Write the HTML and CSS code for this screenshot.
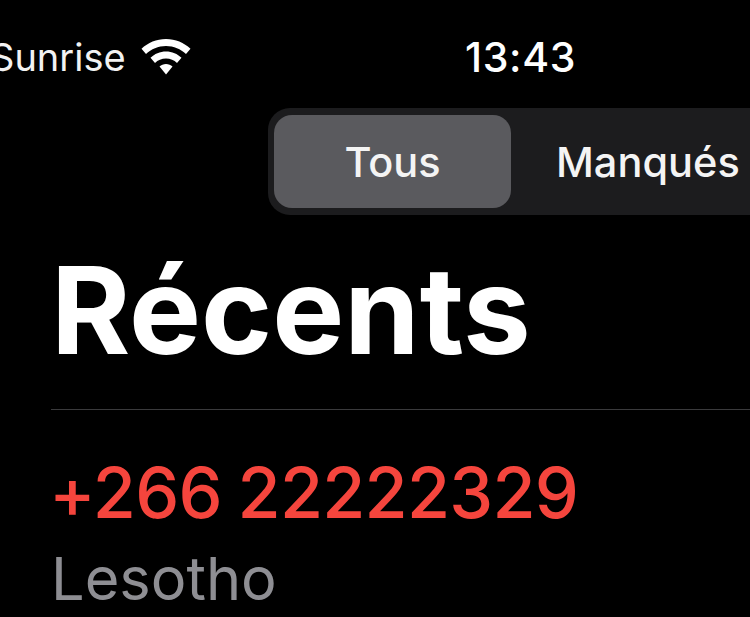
FILE: index.html
```html
<!DOCTYPE html>
<html lang="fr">
<head>
<meta charset="utf-8">
<title>Récents</title>
<link rel="stylesheet" href="styles.css">
</head>
<body>
<div class="status">
  <div class="carrier"><span>Sunrise</span>
    <svg class="wifi" width="50" height="36" viewBox="0 0 50 36"><path fill="#fff" d="M25 0C34.500 0 43 3.600 49.500 9.800L45 15C39.800 10 32.800 7 25 7S10.200 10 5 15L.5 9.800C7 3.600 15.500 0 25 0Z"/><path fill="#fff" d="M25 12.500C31 12.500 36.500 14.800 40.500 18.800L36 24C33.200 21.200 29.300 19.500 25 19.500S16.800 21.200 14 24L9.500 18.800C13.500 14.800 19 12.500 25 12.500Z"/><path fill="#fff" d="M25 25C27.500 25 29.800 26 31.500 27.600L25 35.500L18.500 27.600C20.200 26 22.500 25 25 25Z"/></svg>
  </div>
  <div class="time">13:43</div>
</div>
<div class="seg-row">
  <div class="seg">
    <div class="seg-item seg-on">Tous</div>
    <div class="seg-item">Manqués</div>
  </div>
</div>
<h1 class="title">Récents</h1>
<div class="row">
  <div class="num">+266 22222329</div>
  <div class="loc">Lesotho</div>
</div>
</body>
</html>
```
FILE: styles.css
```css
html, body {
  margin: 0;
  height: 617px;
  overflow: hidden;
  background: #000;
  color: #fff;
  font-family: Inter, "Liberation Sans", sans-serif;
}
.status {
  display: flex;
  align-items: center;
  height: 44px;
  padding-top: 35px;
  margin-left: -10px;
}
.carrier {
  display: flex;
  align-items: center;
  gap: 15px;
  width: 475px;
  font-size: 38px;
  line-height: 44px;
  color: #f2f2f2;
}
.wifi {
  flex: none;
  width: 50px;
  height: 36px;
}
.time {
  font-size: 41px;
  font-weight: 500;
  line-height: 44px;
  letter-spacing: .7px;
}
.seg-row {
  display: flex;
  justify-content: flex-start;
  margin-top: 29px;
  padding-left: 268px;
}
.seg {
  display: flex;
  flex: none;
  width: 560px;
  height: 107px;
  box-sizing: border-box;
  padding: 7px 6px;
  border-radius: 22px;
  background: #1c1c1e;
}
.seg-item {
  flex: none;
  width: 237px;
  display: flex;
  align-items: center;
  justify-content: center;
  font-size: 41.500px;
  font-weight: 500;
  color: #f4f4f4;
}
.seg-on {
  background: #5a5a5e;
  border-radius: 18px;
}
.seg-item + .seg-item {
  justify-content: flex-start;
  padding-left: 45px;
}
.title {
  margin: 30px 0 0 51px;
  font-size: 121px;
  font-weight: 700;
  line-height: 130px;
}
.row {
  margin: 34px 0 0 51px;
  border-top: 1px solid #3a3a3c;
}
.num {
  margin-top: 43px;
  margin-left: -2px;
  font-size: 70px;
  font-weight: 500;
  line-height: 80px;
  letter-spacing: -.8px;
  word-spacing: -2px;
  color: #f5453d;
}
.loc {
  margin-top: 9px;
  font-size: 59.500px;
  line-height: 72px;
  color: #8e8e93;
}
```
